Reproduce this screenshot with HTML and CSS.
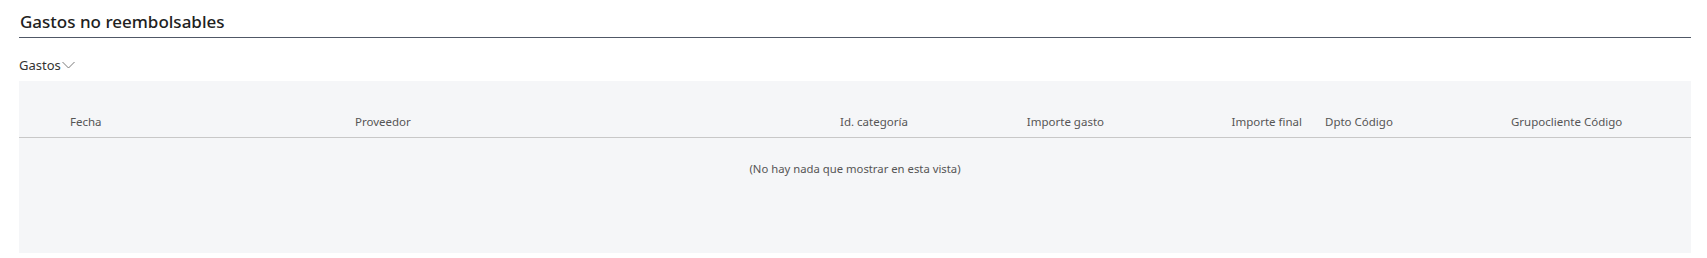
FILE: index.html
```html
<!DOCTYPE html>
<html lang="es">
<head>
<meta charset="utf-8">
<title>Gastos no reembolsables</title>
<link rel="stylesheet" href="styles.css">
</head>
<body>
<section class="part">
  <h2 class="part-title">Gastos no reembolsables</h2>
  <div class="part-menu">
    <span class="menu-label">Gastos</span>
    <svg class="chev" width="13" height="8" viewBox="0 0 13 8"><path d="M0.5 1 L6.5 7 L12.5 1" fill="none" stroke="#7a7a7a" stroke-width="1"/></svg>
  </div>
  <div class="grid">
    <div class="grid-head">
      <div class="cell c-sel"></div>
      <div class="cell c-fecha">Fecha</div>
      <div class="cell c-prov">Proveedor</div>
      <div class="cell c-cat">Id. categoría</div>
      <div class="cell c-gasto num">Importe gasto</div>
      <div class="cell c-final num">Importe final</div>
      <div class="cell c-dpto">Dpto Código</div>
      <div class="cell c-grupo">Grupocliente Código</div>
    </div>
    <div class="grid-empty">(No hay nada que mostrar en esta vista)</div>
  </div>
</section>
</body>
</html>
```
FILE: styles.css
```css
html, body {
  margin: 0;
  padding: 0;
  background: #ffffff;
}
body {
  font-family: "Segoe UI", "Noto Sans", "Open Sans", sans-serif;
  color: #212121;
}
.part {
  padding: 0 16px 0 19px;
}
.part-title {
  margin: 0;
  padding: 9px 0 0 1px;
  height: 28px;
  font-size: 17px;
  font-weight: 500;
  line-height: 26px;
  color: #212121;
  border-bottom: 1px solid #505866;
}
.part-menu {
  display: flex;
  align-items: flex-end;
  box-sizing: border-box;
  height: 43px;
  padding: 0 0 7px 0;
  font-size: 13px;
  color: #333333;
}
.menu-label {
  line-height: 18px;
}
.chev {
  margin: 0 0 5px 1px;
}
.grid {
  background: #f5f6f8;
  height: 172px;
}
.grid-head {
  display: flex;
  height: 56px;
  align-items: flex-end;
  border-bottom: 1px solid #c8c8c8;
  font-size: 11.5px;
  color: #555555;
}
.cell {
  box-sizing: border-box;
  padding: 0 10px 7px;
  line-height: 16px;
  white-space: nowrap;
}
.num { text-align: right; }
.c-sel { width: 41px; }
.c-fecha { width: 285px; }
.c-prov { width: 485px; }
.c-cat { width: 170px; }
.c-gasto { width: 114px; }
.c-final { width: 198px; }
.c-dpto { width: 188px; padding-left: 13px; }
.c-grupo { flex: 1; padding-left: 11px; }
.grid-empty {
  text-align: center;
  padding-top: 23px;
  font-size: 11.3px;
  line-height: 16px;
  color: #555555;
}
```
